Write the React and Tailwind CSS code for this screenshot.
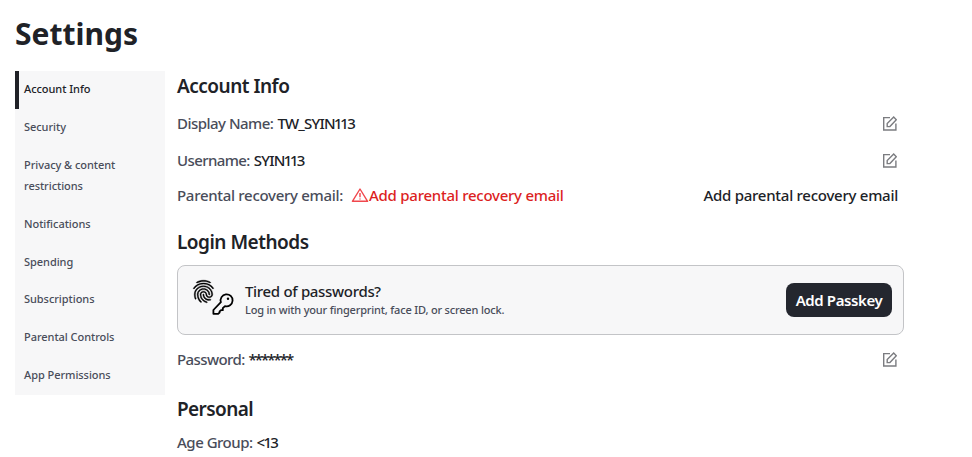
import { MdFingerprint } from "react-icons/md";

const navItems = [
  { label: "Account Info", active: true, style: "h-[38px]" },
  { label: "Security", style: "h-[38px]" },
  { label: "Privacy & content restrictions", style: "h-[59px]" },
  { label: "Notifications", style: "h-[38px]" },
  { label: "Spending", style: "h-[37px]" },
  { label: "Subscriptions", style: "h-[38px]" },
  { label: "Parental Controls", style: "h-[38px]" },
  { label: "App Permissions", style: "h-[38px]" },
];

function EditIcon() {
  return (
    <svg className="w-[14px] h-[15px]" viewBox="0 0 14 15" fill="none" stroke="#7b7c80" strokeWidth="1.4">
      <path d="M7 1.6H0.7V14H12.9V7.5" />
      <path d="M4.2 10.6V7.6L10.7 1.1L13.3 3.7L6.9 10.6Z" />
    </svg>
  );
}

function WarningIcon() {
  return (
    <svg className="w-[18px] h-[14px]" viewBox="0 0 18 14" fill="none" stroke="#f0474d" strokeWidth="1.4">
      <path d="M9 1L16.6 13.3H1.4Z" strokeLinejoin="round" />
      <path d="M9 5V9.3M9 10.4V11.6" />
    </svg>
  );
}

function KeyIcon() {
  return (
    <svg
      className="w-[22px] h-[22px] shrink-0 mt-[13px] -ml-[5px]"
      viewBox="0 0 22 22"
      fill="none"
      stroke="currentColor"
      strokeWidth="1.8"
      strokeLinejoin="round"
    >
      <path d="M8.9 9.2A6 6 0 1 1 13 13.1L10.8 15.2V17.2H9L7.6 18.4V19.6L6.2 20.8H1.4V17Z" />
      <circle cx="16" cy="5.8" r="1.2" fill="currentColor" stroke="none" />
    </svg>
  );
}

function Field({ label, value, className, labelClass, valueClass }) {
  return (
    <div className={`flex items-center justify-between h-6 pr-[7px] ${className}`}>
      <p className="flex gap-1 text-[#494d5a]">
        <span className={labelClass}>{label}</span>
        <span className={`text-[#202227] proportional-nums ${valueClass}`}>{value}</span>
      </p>
      <EditIcon />
    </div>
  );
}

function SectionTitle({ children, className }) {
  return (
    <h2 className={`text-[19px] leading-6 font-semibold text-[#202227] ${className}`}>{children}</h2>
  );
}

function App() {
  return (
    <div className="w-[972px] h-[457px] overflow-hidden bg-white pl-[15px] pt-[14px] font-['Noto_Sans',sans-serif] text-[15px] leading-6 font-medium tracking-[-0.26px] [font-variant-ligatures:none]">
      <h1 className="text-[30px] leading-10 font-bold text-[#202227] tracking-normal">Settings</h1>
      <div className="flex items-start mt-[17px]">
        <nav className="w-[150px] h-[324px] bg-[#f7f7f8]">
          {navItems.map((item) => (
            <div
              key={item.label}
              className={`border-l-4 pl-[5px] pr-6 pt-[7px] text-[11px] leading-[21px] tracking-[-0.05px] ${item.style} ${
                item.active ? "border-[#202227] text-[#202227]" : "border-transparent text-[#494d5a]"
              }`}
            >
              {item.label}
            </div>
          ))}
        </nav>
        <main className="w-[727px] ml-3">
          <SectionTitle className="mt-[3px] tracking-[-0.5px]">Account Info</SectionTitle>
          <Field
            label="Display Name:"
            value="TW_SYIN113"
            className="mt-[13px]"
            labelClass="tracking-[-0.52px]"
            valueClass="tracking-[-0.8px]"
          />
          <Field
            label="Username:"
            value="SYIN113"
            className="mt-[13px]"
            labelClass="tracking-[-0.6px]"
            valueClass="tracking-[-0.8px]"
          />
          <div className="flex items-center justify-between mt-[11px] h-6 pr-[6px]">
            <div className="flex items-center">
              <span className="text-[#494d5a] tracking-[-0.3px]">Parental recovery email:</span>
              <span className="flex items-center ml-2 text-[#dc1f1f]">
                <WarningIcon />
                Add parental recovery email
              </span>
            </div>
            <button className="text-[#202227]">Add parental recovery email</button>
          </div>
          <SectionTitle className="mt-[23px] tracking-[-0.5px]">Login Methods</SectionTitle>
          <div className="flex items-center mt-[11px] h-[70px] rounded-lg border border-[#c3c4c7] bg-[#f7f7f8] pl-[15px] pr-[11px]">
            <div className="flex w-[40px] h-[36px] mb-1 text-black">
              <MdFingerprint
                className="w-[27px] h-[27px] -ml-[3px] -mt-[2px] shrink-0 [&_path[fill=none]]:stroke-none"
                stroke="currentColor"
                strokeWidth="0.4"
              />
              <KeyIcon />
            </div>
            <div className="ml-3 mb-[2px] grow">
              <p className="leading-5 text-[#202227] tracking-[-0.32px]">Tired of passwords?</p>
              <p className="text-[11px] leading-[17px] text-[#494d5a] tracking-[-0.18px]">
                Log in with your fingerprint, face ID, or screen lock.
              </p>
            </div>
            <button className="w-[106px] h-[34px] rounded-lg bg-[#24272f] pb-px text-white font-semibold tracking-[-0.4px]">
              Add Passkey
            </button>
          </div>
          <Field
            label="Password:"
            value="*******"
            className="mt-[12px]"
            labelClass="tracking-[-0.6px]"
            valueClass="tracking-[-2px]"
          />
          <SectionTitle className="mt-[26px] tracking-[-0.6px]">Personal</SectionTitle>
          <p className="flex gap-1 mt-[9px] text-[#494d5a] tracking-[-0.5px]">
            <span>Age Group:</span>
            <span className="text-[#202227] proportional-nums tracking-[-0.9px]">&lt;13</span>
          </p>
        </main>
      </div>
    </div>
  );
}

export default App;
